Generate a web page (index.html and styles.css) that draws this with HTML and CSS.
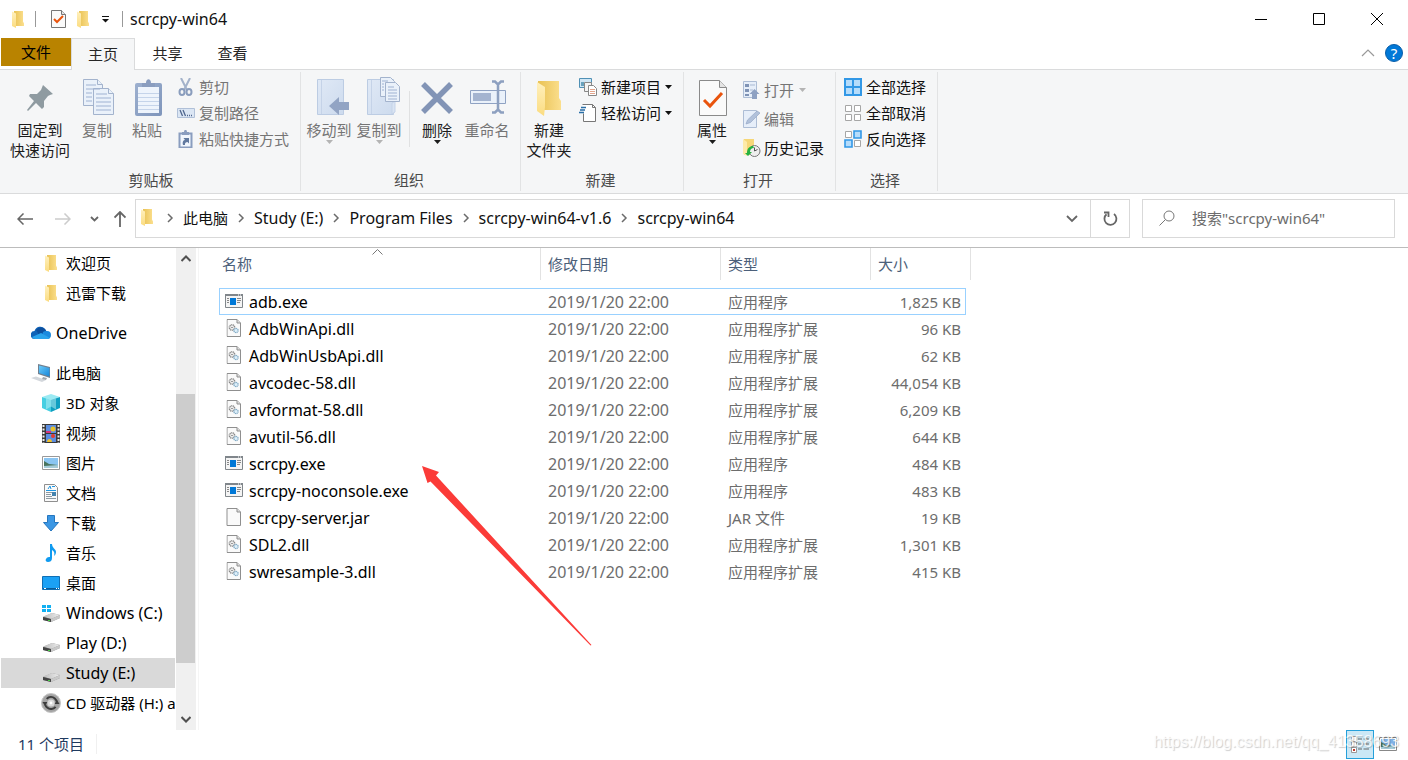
FILE: index.html
```html
<!DOCTYPE html>
<html lang="zh-CN">
<head>
<meta charset="utf-8">
<title>scrcpy-win64</title>
<link rel="stylesheet" href="styles.css">
</head>
<body>
<svg class="defs" aria-hidden="true">
  <defs>
    <linearGradient id="gFold" x1="0" x2="1" y1="0" y2="0"><stop offset="0" stop-color="#e9c254"/><stop offset="1" stop-color="#fbdf8e"/></linearGradient>
    <linearGradient id="gFlap" x1="0" x2="0" y1="0" y2="1"><stop offset="0" stop-color="#fff0bd"/><stop offset="1" stop-color="#fbdc80"/></linearGradient>
    <linearGradient id="gClip" x1="0" x2="1" y1="0" y2="1"><stop offset="0" stop-color="#9db0cf"/><stop offset="1" stop-color="#7f95bb"/></linearGradient>
    <linearGradient id="gPale" x1="0" x2="1" y1="0" y2="1"><stop offset="0" stop-color="#e0e9f6"/><stop offset="1" stop-color="#cddbee"/></linearGradient>
    <linearGradient id="gScreen" x1="0" x2="1" y1="0" y2="1"><stop offset="0" stop-color="#6ccbfa"/><stop offset="1" stop-color="#1585d8"/></linearGradient>
    <linearGradient id="gDisk" x1="0" x2="1" y1="0" y2="0"><stop offset="0" stop-color="#bcbcbc"/><stop offset="1" stop-color="#ededed"/></linearGradient>
  </defs>
  <symbol id="folder" viewBox="0 0 12 17"><path d="M2 0h9v10.500l1 2V15H2z" fill="url(#gFold)"/><path d="M0 .5 4 2.500V17L0 15z" fill="url(#gFlap)"/></symbol>
  <symbol id="bigfolder" viewBox="0 0 24 35"><path d="M1 0h21v17l2 3v9H1z" fill="url(#gFold)"/><path d="M0 1l8 5v20l-1 9-7-5z" fill="url(#gFlap)"/></symbol>
  <symbol id="check" viewBox="0 0 28 36"><path d="M.5.5h20l7 7v28H.5z" fill="#fafafa" stroke="#8a8a8a"/><path d="M20.500.5v7h7" fill="#e4e4e4" stroke="#8a8a8a"/><path d="M5 20l6 6 12-13" fill="none" stroke="#e9540d" stroke-width="3"/></symbol>
  <symbol id="qcheck" viewBox="0 0 15 18"><path d="M.5.5h10l4 4v13H.5z" fill="#fafafa" stroke="#777"/><path d="M10.500.5v4h4" fill="#e4e4e4" stroke="#777"/><path d="M3 9l3 3 6-6" fill="none" stroke="#e9540d" stroke-width="2"/></symbol>
  <symbol id="page" viewBox="0 0 15 18"><path d="M.5.5h10l3.500 3.500v13.500H.5z" fill="#fafafa" stroke="#8f8f8f"/><path d="M10.500.5V4H14" fill="#ddd" stroke="#8f8f8f"/></symbol>
  <symbol id="dll" viewBox="0 0 15 18"><use href="#page" width="15" height="18"/><circle cx="5.500" cy="8.500" r="2.600" fill="none" stroke="#888" stroke-width="1.600" stroke-dasharray="1 .6"/><circle cx="5.500" cy="8.500" r=".8" fill="#777"/><circle cx="9.500" cy="11.500" r="2.100" fill="#dff0fa" stroke="#7fa9c4" stroke-width="1.300" stroke-dasharray="1 .5"/></symbol>
  <symbol id="exe" viewBox="0 0 18 14"><path d="M.5.5h17v13H.5z" fill="#f4f4f4" stroke="#80868b"/><path d="M0 0h18v2H0z" fill="#80868b"/><path d="M13 1h1m1 0h1" stroke="#fff"/><path d="M5 4h6v7H5z" fill="#0078d7"/><path d="M2 4.500h2m-2 2h2m-2 2h2m8-4h4m-4 2h4m-4 2h3" stroke="#888"/></symbol>
  <symbol id="chev" viewBox="0 0 26 12"><path d="M11 2 15 6 11 10" fill="none" stroke="#6b6b6b" stroke-width="1.500"/></symbol>
  <symbol id="tri" viewBox="0 0 7 4"><path d="M0 0h7L3.500 4z" fill="currentColor"/></symbol>
  <symbol id="disk" viewBox="0 0 19 18"><path d="M1 11l9-4 8 2v3l-9 4-8-2z" fill="#8d8d8d"/><path d="M1 10.500l9-3.500 8 2-9 4z" fill="url(#gDisk)"/><path d="M9 13l9-4v3l-9 4z" fill="#c9c9c9"/><path d="M1 11l8 2v3l-8-2z" fill="#444"/><path d="M6 14h2v1H6z" fill="#48d048"/></symbol>
  <symbol id="sheets" viewBox="0 0 31 37"><g stroke="#a3b3cd" fill="#eaf1fa"><path d="M.5.5h14l5 5v21H.5z"/><path d="M14.500.5v5h5"/><path d="M10.500 9.500h15l5 5v21h-20z"/><path d="M25.500 9.500v5h5"/></g><path d="M3 6h10M3 10h14M3 14h6m-6 4h6m-6 4h6M13 15h11m-11 4h15m-15 4h15m-15 4h15m-15 4h15" stroke="#9fb2d2"/></symbol>
</svg>

<div class="window">
  <header class="titlebar">
    <svg class="q-folder" width="12" height="17"><use href="#folder"/></svg>
    <span class="bar"></span>
    <button class="plain q-check" aria-label="属性"><svg width="15" height="18"><use href="#qcheck"/></svg></button>
    <button class="plain q-new" aria-label="新建文件夹"><svg width="12" height="17"><use href="#folder"/></svg></button>
    <button class="plain q-menu" aria-label="自定义快速访问工具栏"><svg width="7" height="7" viewBox="0 0 7 7"><path d="M0 .5h7" stroke="#111"/><path d="M0 3h7L3.500 6.500z" fill="#111"/></svg></button>
    <span class="bar"></span>
    <h1 class="latin">scrcpy-win64</h1>
    <div class="winbtns">
      <button class="plain" aria-label="最小化"><svg width="13" height="13"><path d="M0 6.500h12" stroke="#000"/></svg></button>
      <button class="plain" aria-label="最大化"><svg width="13" height="13"><path d="M.5.5h11v11H.5z" fill="none" stroke="#000"/></svg></button>
      <button class="plain" aria-label="关闭"><svg width="13" height="13"><path d="M0 0l12 12M12 0 0 12" stroke="#000"/></svg></button>
    </div>
  </header>

  <nav class="tabs">
    <button class="tab file">文件</button>
    <button class="tab active">主页</button>
    <button class="tab">共享</button>
    <button class="tab">查看</button>
    <div class="tabs-right">
      <button class="plain" aria-label="折叠功能区"><svg width="14" height="8"><path d="M1 7 7 1l6 6" fill="none" stroke="#999" stroke-width="1.200"/></svg></button>
      <button class="help" aria-label="帮助">?</button>
    </div>
  </nav>

  <section class="ribbon">
    <div class="group g-clip">
      <div class="tools">
        <button class="big wide"><span class="ico"><svg width="28" height="28" viewBox="0 0 28 28"><path d="M17 1l10 9-3 1-2 1-4 5v6l-2 2-6-6-8 8-1-1 7-9-5-5 1-2h7l4-4z" fill="#8f9ba1"/></svg></span>固定到<br>快速访问</button>
        <button class="big off"><span class="ico nudge"><svg width="31" height="37"><use href="#sheets"/></svg></span>复制</button>
        <button class="big off"><span class="ico nudge"><svg width="27" height="37" viewBox="0 0 27 37"><rect y="4" width="27" height="33" rx="2" fill="url(#gClip)"/><path d="M3 8h21v26H3z" fill="#eef4fc"/><path d="M3 14.500h21m-21 4h21m-21 4h21m-21 4h21m-21 4h21" stroke="#c5d4ea"/><path d="M7 4h4c0-5 5-5 5 0h4v4H7z" fill="#8a9dbf"/></svg></span>粘贴</button>
        <div class="list">
          <button class="item off"><svg width="18" height="18" viewBox="0 0 18 18"><path d="M4 0l6 12M13 0 7 12" stroke="#a3b2ca" stroke-width="2"/><g fill="none" stroke="#8a9dbd" stroke-width="2"><ellipse cx="5" cy="14" rx="2.500" ry="3"/><ellipse cx="12" cy="14" rx="2.500" ry="3"/></g></svg>剪切</button>
          <button class="item off"><svg width="18" height="18" viewBox="0 0 18 18"><path d="M.5 4.500h17v9H.5z" fill="#dbe6f4" stroke="#b0c0d8"/><path d="M3 6l2.500 6M6 6l2.500 6M10 11.500h1m1 0h1m1 0h1" stroke="#50678f" stroke-width="1.300"/></svg>复制路径</button>
          <button class="item off"><svg width="18" height="18" viewBox="0 0 18 18"><path d="M2.500 3.500h12v14h-12z" fill="#f1f6fd" stroke="#8a9dbf" stroke-width="2"/><path d="M5 2h2c0-3 3-3 3 0h2v3H5z" fill="#8a9dbf"/><path d="M6 15c-1-4 1-5 2-5L6.500 8H12v5.500L10.500 12C9 12 7.500 13 8 15z" fill="#61799f"/></svg>粘贴快捷方式</button>
        </div>
      </div>
      <h2>剪贴板</h2>
    </div>

    <div class="group g-org">
      <div class="tools">
        <button class="big off"><span class="ico book"><svg width="33" height="37" viewBox="0 0 33 37"><path d="M.5.5h26v35H.5z" fill="url(#gPale)" stroke="#bccce3"/><path d="M4.500 1v34" stroke="#c5d3e8"/><path d="M12 27l10-9v5h10v8H22v5z" fill="#92a4c4"/></svg></span>移动到<svg class="dd" width="7" height="4"><use href="#tri"/></svg></button>
        <button class="big off"><span class="ico book"><svg width="33" height="39" viewBox="0 0 33 39"><path d="M.5 2.500h26v35H.5z" fill="url(#gPale)" stroke="#bccce3"/><path d="M4.500 3v34M25 37V26l3-2v11z" stroke="#c5d3e8" fill="#d9e4f3"/><g stroke="#a3b3cd" fill="#eaf1fa"><path d="M13.500.5h10l4 4v15h-14z"/><path d="M18.500 5.500h10l4 4v15h-14z"/></g><path d="M15 4h6m-6 3h2m-2 3h2m-2 3h2M21 10h6m-6 3h9m-9 3h9m-9 3h9m-9 3h9" stroke="#9fb2d2"/></svg></span>复制到<svg class="dd" width="7" height="4"><use href="#tri"/></svg></button>
        <span class="sep"></span>
        <button class="big"><span class="ico"><svg width="32" height="32" viewBox="0 0 32 32"><path d="M2 2l28 28M30 2 2 30" stroke="#8294b6" stroke-width="5.500"/></svg></span>删除<svg class="dd" width="7" height="4"><use href="#tri"/></svg></button>
        <button class="big off"><span class="ico nudge"><svg width="36" height="34" viewBox="0 0 36 34"><path d="M.5 10.500h35v13H.5z" fill="#eaf1fa" stroke="#8fa2c3"/><path d="M3 13h18v8H3z" fill="#a4b4d0"/><path d="M22 1.500h3l3 3 3-3h3M22 32.500h3l3-3 3 3h3M28 4v26" fill="none" stroke="#8da0c0" stroke-width="2.500"/></svg></span>重命名</button>
      </div>
      <h2>组织</h2>
    </div>

    <div class="group g-new">
      <div class="tools">
        <button class="big"><span class="ico"><svg width="24" height="35"><use href="#bigfolder"/></svg></span>新建<br>文件夹</button>
        <div class="list">
          <button class="item"><svg width="18" height="18" viewBox="0 0 18 18"><path d="M.5.5h12v9H.5z" fill="#cfe6f5" stroke="#4f90b5"/><path d="M2 8V4h3v4z" fill="#69a2bd"/><path d="M5.500 4.500h7v9h-7z" fill="#f4f4f4" stroke="#888"/><path d="M9.500 7.500h5l3 3v7h-8z" fill="#fff" stroke="#888"/><path d="M11 11.500h5m-5 2h5m-5 2h5" stroke="#e3a58d"/></svg>新建项目<svg class="arr" width="7" height="4"><use href="#tri"/></svg></button>
          <button class="item"><svg width="18" height="18" viewBox="0 0 18 18"><path d="M3.500.5h10l3 3v14h-12v-8" fill="#fff" stroke="#777"/><path d="M13.500.5v3h3" fill="none" stroke="#777"/><path d="M2 3.500h5M1 6h5M0 8.500h5" stroke="#2b6fa8" stroke-width="1.300"/></svg>轻松访问<svg class="arr" width="7" height="4"><use href="#tri"/></svg></button>
        </div>
      </div>
      <h2>新建</h2>
    </div>

    <div class="group g-open">
      <div class="tools">
        <button class="big"><span class="ico nudge"><svg width="28" height="36"><use href="#check"/></svg></span>属性<svg class="dd" width="7" height="4"><use href="#tri"/></svg></button>
        <div class="list loose">
          <button class="item off"><svg width="18" height="18" viewBox="0 0 18 18"><path d="M.5.5h13v16H.5z" fill="#e6eef9" stroke="#adbdd5"/><path d="M2 3h4v3H2zM2 8h4v3H2zM2 13h4v2H2z" fill="#7f93b5"/><path d="M7 4h5M7 9h3" stroke="#a9b9d2"/><path d="M11.500 8l5 5h-2.500v5H9v-5H6.500z" fill="#8ea1c2"/></svg>打开<svg class="arr" width="7" height="4"><use href="#tri"/></svg></button>
          <button class="item off"><svg width="18" height="18" viewBox="0 0 18 18"><path d="M.5.5h13v17H.5z" fill="#e6eef9" stroke="#adbdd5"/><path d="M3 14l1.500-4L14 1l3 2-9.500 9.500z" fill="#b1c1da" stroke="#95a8c7" stroke-width=".7"/></svg>编辑</button>
          <button class="item"><svg width="18" height="18" viewBox="0 0 18 18"><path d="M1 0h10v16H1z" fill="#f6d778"/><path d="M0 0l4 3v14l-4-2z" fill="#fdeaa9"/><circle cx="11.500" cy="12" r="5.500" fill="#eee" stroke="#777"/><path d="M11.500 8.500V12l3-1.500" fill="none" stroke="#555"/><path d="M4 14c0-5 3-7 6-7l1 2c-3 0-4 2-4 4h2l-4 4-3-3z" fill="#26b140"/></svg>历史记录</button>
        </div>
      </div>
      <h2>打开</h2>
    </div>

    <div class="group g-sel">
      <div class="tools">
        <div class="list">
          <button class="item"><svg width="18" height="18" viewBox="0 0 18 18"><path d="M1 1h16v16H1z" fill="#b5dcfb" stroke="#3298e6" stroke-width="2"/><path d="M9 1v16M1 9h16" stroke="#3298e6" stroke-width="2"/></svg>全部选择</button>
          <button class="item"><svg width="18" height="18" viewBox="0 0 18 18"><path d="M1.500 1.500h6v6h-6zM10.500 1.500h6v6h-6zM1.500 10.500h6v6h-6zM10.500 10.500h6v6h-6z" fill="#fff" stroke="#a6a6a6"/></svg>全部取消</button>
          <button class="item"><svg width="18" height="18" viewBox="0 0 18 18"><path d="M1.500 1.500h6v6h-6zM10.500 10.500h6v6h-6z" fill="#fff" stroke="#a6a6a6"/><path d="M10 1h7v7h-7zM1 10h7v7H1z" fill="#b5dcfb" stroke="#3298e6" stroke-width="1.600"/></svg>反向选择</button>
        </div>
      </div>
      <h2>选择</h2>
    </div>
  </section>

  <div class="addressrow">
    <button class="plain nav-btn wide" aria-label="后退"><svg width="16" height="12"><path d="M6.500.5 1 6l5.500 5.500M1 6h15" fill="none" stroke="#666" stroke-width="1.500"/></svg></button>
    <button class="plain nav-btn wide" aria-label="前进"><svg width="16" height="12"><path d="M9.500.5 15 6l-5.500 5.500M15 6H0" fill="none" stroke="#ccc" stroke-width="1.500"/></svg></button>
    <button class="plain nav-btn" aria-label="最近的位置"><svg width="9" height="6"><path d="M1 1l3.500 3.500L8 1" fill="none" stroke="#666" stroke-width="1.800"/></svg></button>
    <button class="plain nav-btn" aria-label="上移"><svg width="12" height="16"><path d="M.5 6.500 6 1l5.500 5.500M6 1v15" fill="none" stroke="#666" stroke-width="1.800"/></svg></button>
    <div class="crumbs">
      <svg width="12" height="17"><use href="#folder"/></svg>
      <svg class="first" width="26" height="12"><use href="#chev"/></svg><a href="#">此电脑</a>
      <svg width="26" height="12"><use href="#chev"/></svg><a class="latin" href="#">Study (E:)</a>
      <svg width="26" height="12"><use href="#chev"/></svg><a class="latin" href="#">Program Files</a>
      <svg width="26" height="12"><use href="#chev"/></svg><a class="latin" href="#">scrcpy-win64-v1.6</a>
      <svg width="26" height="12"><use href="#chev"/></svg><a class="latin" href="#">scrcpy-win64</a>
      <button class="plain history" aria-label="以前的位置"><svg width="12" height="8"><path d="M1 1l5 5 5-5" fill="none" stroke="#666" stroke-width="1.800"/></svg></button>
      <button class="plain refresh" aria-label="刷新"><svg width="16" height="16" viewBox="0 0 16 16"><path d="M12 3a6 6 0 1 1-7.500.3" fill="none" stroke="#666" stroke-width="1.800"/><path d="M2 1.500h4.500V6" fill="none" stroke="#666" stroke-width="1.800"/></svg></button>
    </div>
    <label class="search">
      <svg width="16" height="16" viewBox="0 0 16 16"><circle cx="10" cy="6" r="5" fill="none" stroke="#777"/><path d="M6.500 9.500.5 15.500" stroke="#777"/></svg>
      <input type="text" placeholder='搜索"scrcpy-win64"' aria-label="搜索">
    </label>
  </div>

  <main class="body">
    <nav class="tree">
      <a class="node sub" href="#"><svg width="18" height="17"><use href="#folder"/></svg>欢迎页</a>
      <a class="node sub" href="#"><svg width="18" height="17"><use href="#folder"/></svg>迅雷下载</a>
      <a class="node top latin" href="#"><svg width="20" height="14" viewBox="0 0 20 14"><path d="M4 13a4 4 0 0 1-.5-8A6 6 0 0 1 14 3l2 4-8 6z" fill="#0f63b8"/><path d="M5 4a6 6 0 0 1 9-1l2 3h-3L8 9z" fill="#0c4f9e"/><path d="M12 6a5 5 0 0 1 4-1 4 4 0 0 1 0 8h-5z" fill="#1b8ade"/><path d="M1 11l9-4 9 5a4 4 0 0 1-3 1H4a4 4 0 0 1-3-2z" fill="#2aa3ec"/></svg>OneDrive</a>
      <a class="node top" href="#"><svg width="20" height="18" viewBox="0 0 20 18"><path d="M7 0l12 3v11L7 10z" fill="#71808f"/><path d="M8 1.500l10.500 2.500v8.500L8 9z" fill="url(#gScreen)"/><path d="M0 14l5-1.500 10 3.500-4 2z" fill="#d3d7dc"/><path d="M12 13l4 1-1 2-4-1z" fill="#9fa6ad"/></svg>此电脑</a>
      <a class="node sub" href="#"><svg width="18" height="18" viewBox="0 0 18 18"><path d="M9 0l9 3-9 3-9-3z" fill="#9beaf3"/><path d="M0 3l9 3v12l-9-4z" fill="#45cfe2"/><path d="M18 3 9 6v12l9-4z" fill="#0f9fc1"/><path d="M4 4.500v11l5-3 5 3v-11L9 6z" fill="#bdf1f6" opacity=".5"/></svg>3D 对象</a>
      <a class="node sub" href="#"><svg width="18" height="19" viewBox="0 0 18 19"><path d="M0 0h18v19H0z" fill="#3a3a3a"/><path d="M1.500 1v18M16.500 1v18" stroke="#eee" stroke-width="2" stroke-dasharray="2 1.500"/><path d="M4 1h10v8H4zM4 10h10v8H4z" fill="#5b8de0"/><circle cx="11" cy="5" r="2.500" fill="#e8c22a"/><path d="M4 7h5v2H4z" fill="#d6337c"/><circle cx="11" cy="12" r="2" fill="#e33b2e"/><path d="M5 18c0-4 5-4 5 0z" fill="#f0c02a"/></svg>视频</a>
      <a class="node sub" href="#"><svg width="18" height="14" viewBox="0 0 18 14"><path d="M.5.5h17v13H.5z" fill="#fff" stroke="#999"/><path d="M2 2h14v10H2z" fill="#8ac5f2"/><path d="M2 5l5 3 9 1v3H2z" fill="#48745e"/><path d="M2 10l14-1v3H2z" fill="#a5cbd8"/></svg>图片</a>
      <a class="node sub" href="#"><svg width="18" height="18" viewBox="0 0 18 18"><path d="M2.500.5h10l3 3v14h-13z" fill="#fafafa" stroke="#8f8f8f"/><path d="M6 5l2-3 1 3m1-2.500h3M4 6.500h10" fill="none" stroke="#1f96e0"/><path d="M4 8.500h6m-6 2h5m-5 2h6m-6 2h10" stroke="#8e9aa3"/><path d="M10 8h4v4h-4z" fill="#4583ad"/></svg>文档</a>
      <a class="node sub" href="#"><svg width="18" height="17" viewBox="0 0 18 17"><path d="M5.500.5h7v7h4L9 16 1.500 7.500h4z" fill="#3b97e4" stroke="#2576bf"/></svg>下载</a>
      <a class="node sub" href="#"><svg width="18" height="18" viewBox="0 0 18 18"><path d="M8 0h2c0 4 4 5 4 8 0 2-1 3-2 4 1-3 0-5-2-6v8c0 3-2 4-4 4s-3-2-2-3c1-2 3-2 4-2z" fill="#109bf0"/></svg>音乐</a>
      <a class="node sub" href="#"><svg width="18" height="14" viewBox="0 0 18 14"><path d="M.5.5h17v13H.5z" fill="#1ba1f5" stroke="#0f6fb5"/><path d="M1 12.500h16" stroke="#0b5b97"/><path d="M2 12.500h2m10 0h1m1 0h1" stroke="#fff"/></svg>桌面</a>
      <a class="node sub latin" href="#"><svg width="18" height="20" viewBox="0 0 18 20"><use href="#disk" y="3" width="19" height="18"/><path d="M0 2h4v3H0zM5 2h4v3H5zM0 6h4v3H0zM5 6h4v3H5z" fill="#12b0f2"/></svg>Windows (C:)</a>
      <a class="node sub latin" href="#"><svg width="18" height="20" viewBox="0 0 18 20"><use href="#disk" y="3" width="19" height="18"/></svg>Play (D:)</a>
      <a class="node sub current latin" href="#"><svg width="18" height="20" viewBox="0 0 18 20"><use href="#disk" y="3" width="19" height="18"/></svg>Study (E:)</a>
      <a class="node sub" href="#"><svg width="20" height="20" viewBox="0 0 20 20"><circle cx="10" cy="10" r="9.500" fill="#a3a3a3" stroke="#c5c5c5"/><circle cx="10" cy="10" r="6" fill="none" stroke="#3c3c3c" stroke-width="2" stroke-dasharray="13 5.800" transform="rotate(40 10 10)"/><path d="M1.500 9h5L4 13zM13.500 11h5L16 7z" fill="#3c3c3c"/><circle cx="10" cy="10" r="3.600" fill="#d9d9d9"/><circle cx="10" cy="10" r="1.400" fill="#fff"/></svg>CD 驱动器 (H:) a</a>
    </nav>
    <div class="scroll">
      <button class="plain" aria-label="向上滚动"><svg width="10" height="7"><path d="M.5 6 5 1.500 9.500 6" fill="none" stroke="#505050" stroke-width="2"/></svg></button>
      <div class="track"><div class="thumb"></div></div>
      <button class="plain" aria-label="向下滚动"><svg width="10" height="7"><path d="M.5 1 5 5.500 9.500 1" fill="none" stroke="#505050" stroke-width="2"/></svg></button>
    </div>
    <section class="files">
      <table>
        <colgroup><col class="c-name"><col class="c-date"><col class="c-type"><col class="c-size"><col class="c-end"></colgroup>
        <thead><tr><th class="name">名称<svg class="sort" width="11" height="6"><path d="M.5 5.500l5-5 5 5" fill="none" stroke="#777"/></svg></th><th>修改日期</th><th>类型</th><th class="last" colspan="2">大小</th></tr></thead>
        <tbody>
          <tr class="focus"><td><svg width="18" height="20"><use href="#exe" width="18" height="14" y="2"/></svg>adb.exe</td><td class="latin">2019/1/20 22:00</td><td>应用程序</td><td>1,825 KB</td></tr>
          <tr><td><svg width="18" height="20"><use href="#dll" width="18" height="18"/></svg>AdbWinApi.dll</td><td class="latin">2019/1/20 22:00</td><td>应用程序扩展</td><td>96 KB</td></tr>
          <tr><td><svg width="18" height="20"><use href="#dll" width="18" height="18"/></svg>AdbWinUsbApi.dll</td><td class="latin">2019/1/20 22:00</td><td>应用程序扩展</td><td>62 KB</td></tr>
          <tr><td><svg width="18" height="20"><use href="#dll" width="18" height="18"/></svg>avcodec-58.dll</td><td class="latin">2019/1/20 22:00</td><td>应用程序扩展</td><td>44,054 KB</td></tr>
          <tr><td><svg width="18" height="20"><use href="#dll" width="18" height="18"/></svg>avformat-58.dll</td><td class="latin">2019/1/20 22:00</td><td>应用程序扩展</td><td>6,209 KB</td></tr>
          <tr><td><svg width="18" height="20"><use href="#dll" width="18" height="18"/></svg>avutil-56.dll</td><td class="latin">2019/1/20 22:00</td><td>应用程序扩展</td><td>644 KB</td></tr>
          <tr><td><svg width="18" height="20"><use href="#exe" width="18" height="14" y="2"/></svg>scrcpy.exe</td><td class="latin">2019/1/20 22:00</td><td>应用程序</td><td>484 KB</td></tr>
          <tr><td><svg width="18" height="20"><use href="#exe" width="18" height="14" y="2"/></svg>scrcpy-noconsole.exe</td><td class="latin">2019/1/20 22:00</td><td>应用程序</td><td>483 KB</td></tr>
          <tr><td><svg width="18" height="20"><use href="#page" width="18" height="18"/></svg>scrcpy-server.jar</td><td class="latin">2019/1/20 22:00</td><td>JAR 文件</td><td>19 KB</td></tr>
          <tr><td><svg width="18" height="20"><use href="#dll" width="18" height="18"/></svg>SDL2.dll</td><td class="latin">2019/1/20 22:00</td><td>应用程序扩展</td><td>1,301 KB</td></tr>
          <tr><td><svg width="18" height="20"><use href="#dll" width="18" height="18"/></svg>swresample-3.dll</td><td class="latin">2019/1/20 22:00</td><td>应用程序扩展</td><td>415 KB</td></tr>
        </tbody>
      </table>
      <svg class="pointer" width="172" height="182" viewBox="0 0 172 182"><path d="M0 0l17 6-3 3.500L169.500 179l-1 .5L8.500 15.500 5.500 17z" fill="#fb3b38"/></svg>
    </section>
  </main>

  <footer class="status">
    <span class="count">11 个项目</span>
    <div class="views">
      <button class="view on" aria-label="详细信息"><svg width="18" height="17" viewBox="0 0 18 17"><path d="M.5.5h5v5h-5zM.5 6h5v5h-5zM.5 11.500h5v5h-5z" fill="#fff" stroke="#999"/><path d="M7 3h4m1.500 0H18M7 8h4m1.500 0H18M7 13h4m1.500 0H18" stroke="#666"/><path d="M2 13h2v2H2z" fill="#c0392b"/></svg></button>
      <button class="view" aria-label="大图标"><svg width="18" height="14" viewBox="0 0 18 14"><path d="M.5.5h17v13H.5z" fill="#fff" stroke="#888"/><path d="M2 2h14v10H2z" fill="#7fb2e6"/><path d="M2 5l5 3 9 1v3H2z" fill="#48745e"/><path d="M2 10l14-1v3H2z" fill="#a5cbd8"/></svg></button>
    </div>
    <span class="watermark">https://blog.csdn.net/qq_41358693</span>
  </footer>
</div>
</body>
</html>
```

FILE: styles.css
```css
* { box-sizing: border-box; }

body {
  margin: 0;
  background: #fff;
  color: #111;
  font: 15px/20px "Noto Sans", "Noto Sans CJK SC", sans-serif;
}

button, input { font: inherit; color: inherit; }
a { color: inherit; text-decoration: none; }
svg { flex: none; display: block; }
h1, h2 { margin: 0; font: inherit; }
.latin, h1.latin { font-size: 16px; }

.defs { position: absolute; width: 0; height: 0; }

.plain {
  display: flex;
  align-items: center;
  justify-content: center;
  padding: 0;
  border: 0;
  background: none;
}

.window {
  display: flex;
  flex-direction: column;
  min-height: 100vh;
}

/* Title bar */
.titlebar {
  display: flex;
  align-items: center;
  height: 38px;
  padding-left: 12px;
}
.titlebar .bar { width: 1px; height: 16px; background: #999; }
.q-folder { margin-right: 11px; }
.q-check { margin-left: 15px; }
.q-new { margin-left: 11px; }
.q-menu { margin: 0 13px; }
.titlebar h1 { margin-left: 7px; }
.winbtns { display: flex; margin-left: auto; padding-right: 2px; }
.winbtns button { width: 58px; height: 38px; }

/* Tabs */
.tabs {
  display: flex;
  height: 32px;
  padding-left: 1px;
  border-bottom: 1px solid #dadbdc;
}
.tab {
  width: 65px;
  height: 31px;
  padding: 0 0 2px;
  border: 0;
  background: none;
  color: #262626;
}
.tab.file { width: 70px; height: 28px; padding: 0; background: #b98300; color: #000; }
.tab.active {
  width: 64px;
  height: 32px;
  border: 1px solid #dadbdc;
  border-bottom: 0;
  background: #f5f6f7;
}
.tabs-right {
  display: flex;
  align-items: center;
  gap: 10px;
  height: 30px;
  margin-left: auto;
  padding-right: 5px;
}
.help {
  width: 18px;
  height: 18px;
  padding: 0;
  border: 1px solid #0a5ea8;
  border-radius: 50%;
  background: #0078d7;
  color: #fff;
  font-size: 15px;
  line-height: 16px;
}

/* Ribbon */
.ribbon {
  display: flex;
  height: 124px;
  background: #f5f6f7;
  border-bottom: 1px solid #dadbdc;
}
.group {
  display: flex;
  flex-direction: column;
  justify-content: space-between;
  margin: 2px 0;
  padding: 0 0 1px 3px;
  border-right: 1px solid #e2e3e4;
}
.g-clip { width: 301px; padding-left: 8px; }
.g-org { width: 220px; }
.g-new { width: 163px; }
.g-open { width: 152px; }
.g-sel { width: 102px; }
.group h2 { padding-right: 6px; color: #4a4a4a; text-align: center; }
.tools { display: flex; align-items: flex-start; }
.big {
  display: flex;
  flex-direction: column;
  align-items: center;
  width: 50px;
  padding: 0;
  border: 0;
  background: none;
  color: #1c1c1c;
  line-height: 20px;
  white-space: nowrap;
}
.big.wide { width: 64px; }
.ico {
  display: flex;
  align-items: flex-end;
  justify-content: center;
  height: 44px;
  margin-bottom: 4px;
}
.ico.nudge { padding-left: 2px; }
.ico.book { padding-left: 8px; }
.wide .ico { height: 40px; margin-bottom: 8px; }
.g-org .big:nth-of-type(n+3) .ico { height: 42px; margin-bottom: 6px; }
.off { color: #757575; }
.off .dd, .off .arr { color: #b4b4b4; }
.sep {
  width: 1px;
  height: 56px;
  margin: 19px 2px 0 5px;
  background: #e0e1e2;
}
.list {
  display: flex;
  flex-direction: column;
  gap: 6px;
  margin-left: 5px;
  padding-top: 5px;
}
.list.loose { gap: 9px; margin-left: 6px; padding-top: 8px; }
.item {
  display: flex;
  align-items: center;
  gap: 4px;
  height: 20px;
  padding: 0;
  border: 0;
  background: none;
  white-space: nowrap;
}
.loose .item { gap: 3px; }
.loose .arr { margin-left: 2px; }

/* Address row */
.addressrow {
  display: flex;
  align-items: center;
  height: 54px;
  padding: 0 13px 4px 6px;
  border-bottom: 1px solid #bcbcbc;
}
.nav-btn { width: 25px; height: 39px; }
.nav-btn.wide { width: 38px; }
.crumbs {
  display: flex;
  flex: 1;
  align-items: center;
  height: 39px;
  margin-left: 3px;
  padding: 0 0 2px 5px;
  border: 1px solid #d9d9d9;
}
.crumbs .first { margin-left: 4px; }
.crumbs button { height: 37px; margin-bottom: -2px; }
.history { width: 37px; margin-left: auto; }
.refresh { width: 39px; border-left: 1px solid #d9d9d9; }
.search {
  display: flex;
  align-items: center;
  gap: 17px;
  width: 253px;
  height: 39px;
  margin-left: 12px;
  padding: 0 16px 2px;
  border: 1px solid #d9d9d9;
}
.search input {
  flex: 1;
  min-width: 0;
  padding: 0;
  border: 0;
  outline: 0;
}
.search input::placeholder { color: #6d6d6d; opacity: 1; }

/* Body */
.body { display: flex; flex: 1; }
.tree {
  width: 175px;
  padding-left: 1px;
  overflow: hidden;
  color: #000;
}
.node {
  display: flex;
  align-items: center;
  gap: 5px;
  height: 30px;
  white-space: nowrap;
}
.node.top { margin-top: 10px; padding-left: 30px; }
.node.sub { padding-left: 40px; }
.node.sub svg { width: 20px; }
.node.current { background: #d9d9d9; }
.scroll {
  display: flex;
  flex-direction: column;
  width: 20px;
  margin-left: 1px;
  background: #f0f0f0;
}
.scroll button { height: 21px; padding-right: 1px; }
.track { flex: 1; padding: 125px 1px 0 0; }
.thumb { height: 269px; background: #cdcdcd; }

/* File list */
.files {
  position: relative;
  flex: 1;
  margin-left: 2px;
  padding-left: 20px;
  border-left: 1px solid #f5f5f5;
}
table { width: 752px; table-layout: fixed; border-spacing: 0; }
.c-name { width: 322px; }
.c-date { width: 180px; }
.c-type { width: 150px; }
.c-size { width: 95px; }
.c-end { width: 5px; }
th {
  height: 32px;
  padding: 0 7px;
  border-right: 1px solid #e2e2e2;
  color: #4c607a;
  font-weight: 400;
  text-align: left;
}
th.name { position: relative; padding-left: 3px; }
.sort { position: absolute; top: 1px; left: 153px; }
tbody::before { content: ""; display: block; height: 8px; }
td {
  height: 27px;
  padding: 0 7px;
  border: 1px solid transparent;
  border-width: 1px 0;
  color: #6d6d6d;
  white-space: nowrap;
}
td:first-child {
  display: flex;
  align-items: center;
  gap: 6px;
  padding: 0 0 0 5px;
  color: #000;
  font-size: 16px;
  border-left-width: 1px;
}
td:last-child { padding: 0 4px 0 0; border-right-width: 1px; text-align: right; }
.focus td { border-color: #99d1ff; }
.pointer { position: absolute; top: 218px; left: 223px; }

/* Status bar */
.status {
  position: relative;
  display: flex;
  align-items: center;
  justify-content: space-between;
  height: 30px;
  padding: 0 6px 2px 18px;
}
.count { padding-right: 12px; border-right: 1px solid #f0f0f0; color: #1f3a5f; }
.views { display: flex; }
.view {
  display: flex;
  align-items: center;
  justify-content: center;
  width: 28px;
  height: 29px;
  padding: 0;
  border: 0;
  background: none;
}
.view.on { border: 1px solid #26a0da; background: #cbe8f6; }
.watermark {
  position: absolute;
  top: 2px;
  right: 9px;
  color: rgba(255, 255, 255, .8);
  font: 16px/20px "Liberation Sans", sans-serif;
  text-shadow: 1px 1px 1px rgba(0, 0, 0, .2);
}
```
